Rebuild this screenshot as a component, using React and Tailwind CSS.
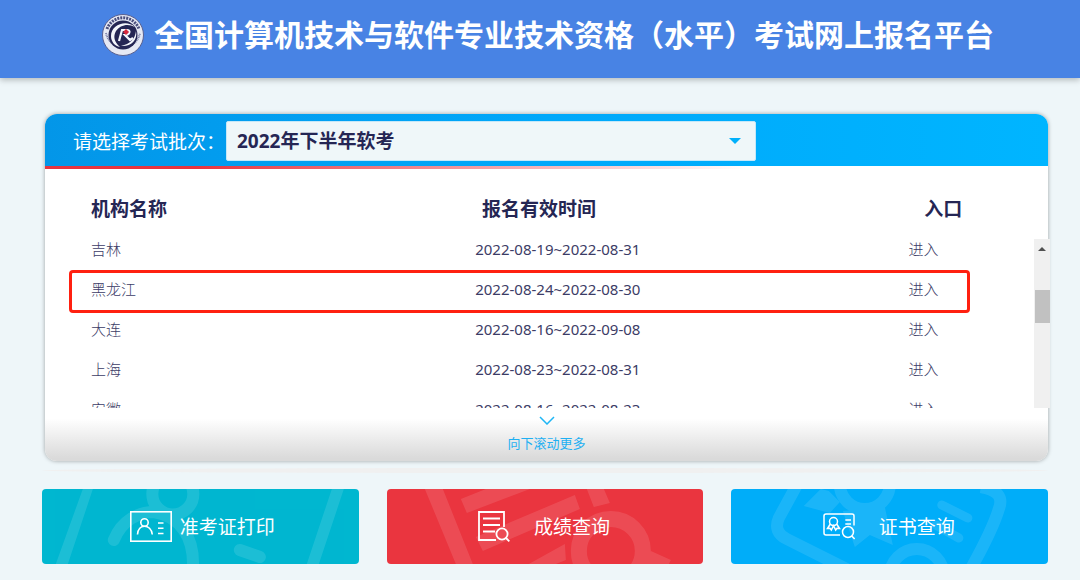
import { useState } from 'react';

const batches = ['2022年下半年软考'];

const regions = [
  { name: '吉林', time: '2022-08-19~2022-08-31' },
  { name: '黑龙江', time: '2022-08-24~2022-08-30' },
  { name: '大连', time: '2022-08-16~2022-09-08' },
  { name: '上海', time: '2022-08-23~2022-08-31' },
  { name: '安徽', time: '2022-08-16~2022-08-23' },
];

function Logo() {
  return (
    <svg viewBox="0 0 42 42" className="size-[42px] shrink-0" aria-hidden="true">
      <circle cx="21" cy="21" r="20.5" fill="#e6e9f4" stroke="#5a6190" strokeWidth="1" />
      {/* ring lettering */}
      <path d="M5 15 A17 17 0 0 1 37 15" fill="none" stroke="#4a4e7c" strokeWidth="3" strokeDasharray="2 1" />
      <path d="M4 19 A17.3 17.3 0 0 0 38 19" fill="none" stroke="#7b80a8" strokeWidth="2" strokeDasharray="1 0.7" />
      <circle cx="21" cy="21" r="14.5" fill="#252654" />
      {/* swooshes */}
      <path d="M33 13 C24 5 9 11 9 22 C9 28 13 32 18 33 C12 28 11 22 14 17 C18 11 26 9 33 13 Z" fill="#f4f6fc" />
      <path d="M34 17 C36 27 28 33 19 32 C28 30 33 25 34 17 Z" fill="#f4f6fc" />
      <path d="M17 27 L20 16 H25 C29 16 28 21 23 21 L28 26 L31 24" fill="none" stroke="#f4f6fc" strokeWidth="2.2" />
      <path d="M21 18 L24 15 L27 18 L24 21 Z" fill="#d8283c" />
    </svg>
  );
}

function IdCardIcon() {
  return (
    <svg viewBox="0 0 42 31" className="h-[31px] w-[42px]" fill="none" stroke="white" strokeWidth="1.6" aria-hidden="true">
      <rect x="0.8" y="0.8" width="40.4" height="29.4" />
      <circle cx="14.5" cy="11.5" r="3.7" />
      <path d="M7.5 23.5 C7.8 18 11 15.2 14.5 15.2 C18 15.2 21.8 18 22.3 23.5" />
      <path d="M28 12 H33.5 M28 17.3 H33.5 M28 22.5 H33.5" />
    </svg>
  );
}

function ScoreIcon() {
  return (
    <svg viewBox="0 0 32 31" className="h-[31px] w-8" fill="none" stroke="white" strokeWidth="1.8" aria-hidden="true">
      <path d="M26 16 V1 H1 V29 H18" />
      <path d="M5 7.5 H22 M5 14 H22 M5 20.5 H17" />
      <circle cx="24" cy="23" r="5.6" />
      <path d="M27.5 26.5 L31.3 30.3" />
    </svg>
  );
}

function CertIcon() {
  return (
    <svg viewBox="0 0 32 27" className="h-[27px] w-8" fill="none" stroke="white" strokeWidth="1.5" aria-hidden="true">
      <path d="M31 12.5 V3 A2 2 0 0 0 29 1 H3 A2 2 0 0 0 1 3 V20 A2 2 0 0 0 3 22 H17" />
      <circle cx="10.5" cy="8.6" r="4" />
      <path d="M7.3 11 L4.5 15.5 L7 15.3 L8.3 17 L10.5 12.6 L12.7 17 L14 15.3 L16.5 15.5 L13.7 11" />
      <path d="M22.3 7 H28 M22.3 11 H28" />
      <circle cx="25" cy="19" r="5.5" />
      <path d="M28.8 23 L31.6 26" />
    </svg>
  );
}

function IdCardPattern() {
  return (
    <g opacity="0.11">
      <path d="M41 0 H51 L26 75 H14 Z M290 0 H302 L277 75 H265 Z" fill="white" />
      <g fill="none" stroke="white" strokeWidth="12" strokeLinecap="round">
        <circle cx="131" cy="5" r="20.5" />
        <path d="M72 51 C80 31 97 23 112 23 C138 27 153 48 151 80" />
        <path d="M198 61 L218 68" />
      </g>
    </g>
  );
}

function ScorePattern() {
  return (
    <g opacity="0.11">
      <path
        fill="white"
        d="M38 0 H56 L86 75 H69 Z M74 10 L99 0 H143 L80 24 Z M89 48 L188 6 L193 20 L96 62 Z M142 75 L178 55 L179 71 L169 75 Z M200 0 H217 L223 14 L207 18 Z M264 62 L284 71 L282 75 H255 Z"
      />
      <circle cx="224" cy="62" r="32" fill="none" stroke="white" strokeWidth="16" />
    </g>
  );
}

function CertPattern() {
  return (
    <g opacity="0.1">
      <path fill="white" d="M73 17 L90 0 L98 2 L109 13 L99 24 Z M112 22 L124 58 L139 46 L162 56 L154 18 Z" />
      <g fill="none" stroke="white" strokeWidth="12">
        <circle cx="134" cy="-5" r="25" />
        <path d="M66 -4 L48 29 Q42 43 56 50 L116 80" />
        <path d="M250 -2 Q275 2 268 20 Q262 40 241 78" />
        <circle cx="186" cy="87" r="27" />
        <path d="M211 16 L237 29 M205 36 L228 49" strokeWidth="9" strokeLinecap="round" />
      </g>
    </g>
  );
}

const actions = [
  { label: '准考证打印', color: 'bg-[#00b7d0]', spacing: 'gap-2 pl-1', Icon: IdCardIcon, Pattern: IdCardPattern },
  { label: '成绩查询', color: 'bg-[#ea353f]', spacing: 'gap-6 pr-0.5', Icon: ScoreIcon, Pattern: ScorePattern },
  { label: '证书查询', color: 'bg-[#00adf9]', spacing: 'gap-6 pr-0.5', Icon: CertIcon, Pattern: CertPattern },
];

function BatchBar() {
  const [batch, setBatch] = useState(batches[0]);

  return (
    <div className="flex h-[52px] items-center rounded-t-xl bg-linear-to-r from-[#0396e8] via-[#00a8fa] to-[#00b5ff] pt-0.5 pl-7">
      <label htmlFor="batch" className="w-[153px] shrink-0 pt-0.5 text-[19px] leading-7 whitespace-nowrap text-white">
        请选择考试批次：
      </label>
      <div className="relative w-[530px]">
        <select
          id="batch"
          value={batch}
          onChange={(e) => setBatch(e.target.value)}
          className="block h-10 w-full appearance-none rounded-xs border border-[#c5e8f8] bg-[#eff7f9] px-2.5 text-[19px] font-bold text-[#252654]"
        >
          {batches.map((b) => (
            <option key={b}>{b}</option>
          ))}
        </select>
        <svg viewBox="0 0 12 6" className="pointer-events-none absolute top-[17px] right-[15px] h-1.5 w-3" aria-hidden="true">
          <path d="M0 0 H12 L6 6 Z" fill="#00b0fb" />
        </svg>
      </div>
    </div>
  );
}

function RegionList() {
  return (
    <div className="pt-5">
      <table className="w-[98.6%] table-fixed text-left text-[19px] leading-10 text-[#252654]">
        <thead>
          <tr>
            <th className="w-[44.2%] pl-[46px] font-bold">机构名称</th>
            <th className="w-[44.7%] font-bold">报名有效时间</th>
            <th className="font-bold">入口</th>
          </tr>
        </thead>
      </table>

      <div className="-mr-0.5 flex h-[179px]">
        <div className="relative min-w-0 flex-1 overflow-hidden">
          <table className="w-full table-fixed text-left text-[15px] text-[#3c3c66]" aria-label="报名有效时间">
            <tbody>
              {regions.map((r) => (
                <tr key={r.name} className="h-10">
                  <td className="w-[43.5%] pl-[46px] font-light">{r.name}</td>
                  <td className="w-[43.8%]">{r.time}</td>
                  <td className="font-light">
                    <a href="#enter">进入</a>
                  </td>
                </tr>
              ))}
            </tbody>
          </table>
          {/* marker around 黑龙江 */}
          <div className="pointer-events-none absolute top-[41px] right-16 left-6 h-[43px] rounded-sm border-[3px] border-[#ff2010]" />
        </div>
        {/* scrollbar */}
        <div className="mt-2.5 flex w-4 flex-col items-center bg-[#f0f0f0]">
          <svg viewBox="0 0 8 4" className="mt-2 h-1 w-2" aria-hidden="true">
            <path d="M0 4 L4 0 L8 4 Z" fill="#505050" />
          </svg>
          <div className="mt-[39px] h-[33px] w-[15px] bg-[#c1c1c1]" />
        </div>
      </div>

      <button
        type="button"
        className="flex h-[53px] w-full flex-col items-center rounded-b-xl bg-linear-to-b from-white from-20% to-[#dadada] to-95% pt-2 text-[13px] leading-5 text-[#1fb0f2]"
      >
        <svg viewBox="0 0 16 9" className="mb-2 h-[9px] w-4 shrink-0" fill="none" stroke="#1fb6f5" strokeWidth="1.5" aria-hidden="true">
          <path d="M1 1 L8 8 L15 1" />
        </svg>
        向下滚动更多
      </button>
    </div>
  );
}

export default function App() {
  return (
    <div className="min-h-screen bg-[#eef6f9] font-['Noto_Sans','Noto_Sans_CJK_SC',sans-serif]">
      <header className="flex h-[78px] items-center justify-center gap-2.5 bg-[#4883e4] pb-2 pl-4 shadow-[0_2px_6px_rgba(0,0,0,0.25)]">
        <Logo />
        <h1 className="text-[30px] leading-10 font-bold whitespace-nowrap text-white">
          全国计算机技术与软件专业技术资格（水平）考试网上报名平台
        </h1>
      </header>

      <main className="pt-9 pr-8 pb-4 pl-[42px]">
        <section className="ml-[3px] rounded-xl bg-white shadow-[0_0_4px_rgba(0,0,0,0.35)]">
          <BatchBar />
          <div className="h-[3px] bg-linear-to-r from-[#e8343f] from-15% to-transparent to-70%" />
          <RegionList />
        </section>

        <div className="mt-[7px] h-[5px] rounded-[50%] bg-[#f0f0f0]" />

        <nav className="mt-4 grid grid-cols-3 gap-7">
          {actions.map(({ label, color, spacing, Icon, Pattern }) => (
            <button
              key={label}
              type="button"
              className={`relative h-[75px] overflow-hidden rounded-sm text-[19px] leading-7 text-white ${color}`}
            >
              <svg viewBox="0 0 317 75" preserveAspectRatio="xMidYMid slice" className="absolute inset-0 size-full" aria-hidden="true">
                <Pattern />
              </svg>
              <span className={`relative flex items-center justify-center ${spacing}`}>
                <Icon />
                {label}
              </span>
            </button>
          ))}
        </nav>
      </main>
    </div>
  );
}
